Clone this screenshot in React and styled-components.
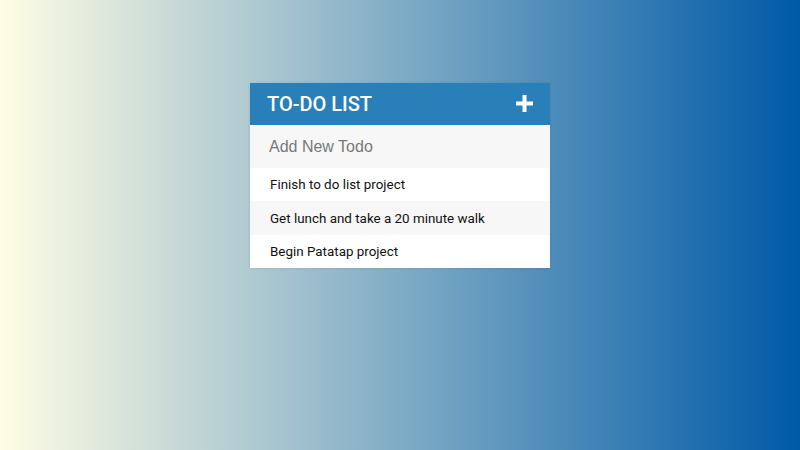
import React from "react";
import styled, { createGlobalStyle } from "styled-components";

const GlobalStyle = createGlobalStyle`
  html, body {
    margin: 0;
    padding: 0;
    height: 100%;
  }
  body {
    font-family: Roboto, "Liberation Sans", sans-serif;
    background: linear-gradient(to right, #fffde4, #005aa7);
  }
  #root {
    height: 100%;
  }
`;

const Page = styled.div`
  height: 450px;
  display: flex;
  justify-content: center;
  padding-top: 83px;
  box-sizing: border-box;
`;

const Card = styled.div`
  width: 300px;
  align-self: flex-start;
  background: #fff;
  box-shadow: 0 0 3px rgba(0, 0, 0, 0.1);
`;

const Header = styled.div`
  height: 41px;
  background: #2980b9;
  color: #fff;
  display: flex;
  align-items: center;
  justify-content: space-between;
  padding: 0 17px 0 17px;
`;

const Title = styled.h1`
  margin: 0;
  font-size: 20px;
  font-weight: 500;
  text-transform: uppercase;
`;

const AddButton = styled.button`
  border: 0;
  background: none;
  padding: 0;
  display: flex;
  cursor: pointer;
`;

const NewTodo = styled.input`
  display: block;
  width: 100%;
  box-sizing: border-box;
  height: 44px;
  border: 0;
  outline: none;
  background: #f7f7f7;
  padding: 0 19px;
  font-family: "Liberation Sans", Arial, sans-serif;
  font-size: 16px;
  color: #333;
  border-top: 1px solid #2a7eb6;

  &::placeholder {
    color: #777;
  }
`;

const List = styled.ul`
  list-style: none;
  margin: 0;
  padding: 0;
`;

const Item = styled.li`
  height: ${(p) => (p.$alt ? 34 : 33)}px;
  display: flex;
  align-items: center;
  padding: 0 20px;
  font-size: 13.4px;
  color: #111;
  background: ${(p) => (p.$alt ? "#f7f7f7" : "#fff")};
`;

const todos = [
  "Finish to do list project",
  "Get lunch and take a 20 minute walk",
  "Begin Patatap project",
];

function PlusIcon() {
  return (
    <svg width="17" height="17" viewBox="0 0 17 17">
      <path d="M6.5 0h4v6.5H17v4h-6.5V17h-4v-6.5H0v-4h6.5z" fill="#fff" />
    </svg>
  );
}

export default function App() {
  return (
    <>
      <GlobalStyle />
      <Page>
        <Card>
          <Header>
            <Title>To-Do List</Title>
            <AddButton aria-label="Add">
              <PlusIcon />
            </AddButton>
          </Header>
          <NewTodo placeholder="Add New Todo" />
          <List>
            {todos.map((t, i) => (
              <Item key={t} $alt={i % 2 === 1}>
                {t}
              </Item>
            ))}
          </List>
        </Card>
      </Page>
    </>
  );
}
